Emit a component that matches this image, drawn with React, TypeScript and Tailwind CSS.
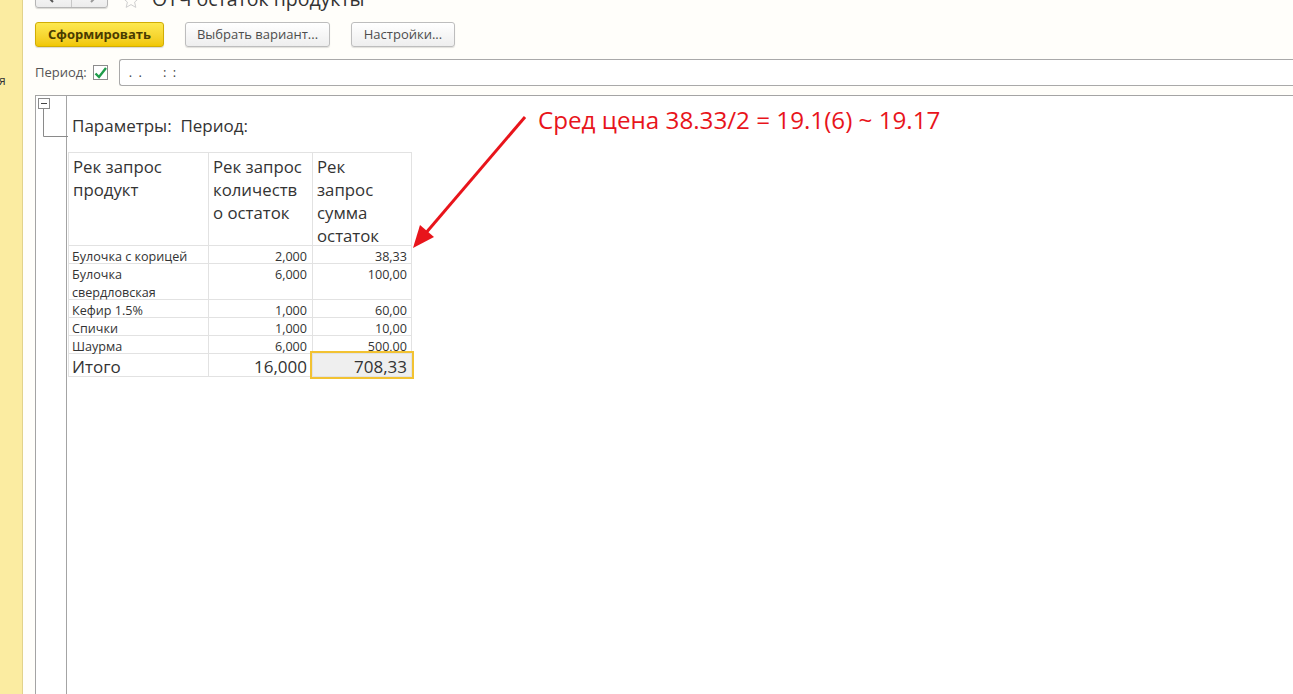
import React from "react";

const font = { fontFamily: '"Open Sans", "Liberation Sans", sans-serif' };

type Row = { name: React.ReactNode; qty: string; sum: string; h: string };

const rows: Row[] = [
  { name: "Булочка с корицей", qty: "2,000", sum: "38,33", h: "h-[17px]" },
  {
    name: (
      <>
        Булочка
        <br />
        свердловская
      </>
    ),
    qty: "6,000",
    sum: "100,00",
    h: "h-[35px]",
  },
  { name: "Кефир 1.5%", qty: "1,000", sum: "60,00", h: "h-[17px]" },
  { name: "Спички", qty: "1,000", sum: "10,00", h: "h-[17px]" },
  { name: "Шаурма", qty: "6,000", sum: "500,00", h: "h-[17px]" },
];

function NavButtons() {
  return (
    <div className="flex h-[24px] w-[73px] rounded-[3px] border border-[#b5b5b5] bg-gradient-to-b from-white to-[#ececec] shadow-[0_1px_1px_rgba(0,0,0,0.15)]">
      <div className="flex flex-1 items-end justify-center border-r border-[#c8c8c8] pb-[4px]">
        <svg width="16" height="12" viewBox="0 0 16 12">
          <path d="M15 6H3M7 1L2 6l5 5" stroke="#555" strokeWidth="2" fill="none" />
        </svg>
      </div>
      <div className="flex flex-1 items-end justify-center pb-[4px]">
        <svg width="16" height="12" viewBox="0 0 16 12">
          <path d="M1 6h12M9 1l5 5-5 5" stroke="#999" strokeWidth="2" fill="none" />
        </svg>
      </div>
    </div>
  );
}

function Star() {
  return (
    <svg width="18" height="17" viewBox="0 0 18 17">
      <path
        d="M9 1l2.3 5 5.4.5-4.1 3.6 1.2 5.3L9 12.6 4.2 15.4l1.2-5.3L1.3 6.5l5.4-.5z"
        fill="none"
        stroke="#cfcfcf"
        strokeWidth="1"
      />
    </svg>
  );
}

function GreyButton({ label, w }: { label: string; w: string }) {
  return (
    <button
      className={`${w} h-[25px] rounded-[3px] border border-[#bdbdbd] bg-gradient-to-b from-white to-[#eeeeee] text-[13px] text-[#4d4d4d] shadow-[0_1px_1px_rgba(0,0,0,0.12)]`}
    >
      {label}
    </button>
  );
}

const cell = "border border-[#e2e2e2]";

export default function App() {
  return (
    <div className="relative flex h-[694px] w-[1293px] overflow-hidden bg-white text-[#333]" style={font}>
      {/* left section panel */}
      <div className="w-[23px] shrink-0 border-r border-[#e2d38b] bg-[#fbeca1] pt-[72px] text-[12px] text-[#333]">
        <span className="-ml-[1px]">я</span>
      </div>

      <div className="flex min-w-0 flex-1 flex-col bg-[#fffefa] pl-[12px]">
        {/* title line */}
        <div className="-mt-[16px] flex h-[24px] items-end">
          <NavButtons />
          <div className="ml-[14px] mb-[-1px]">
            <Star />
          </div>
          <div className="ml-[12px] translate-y-[3px] text-[19.5px] leading-[24px] text-[#333]">
            ОТЧ остаток продукты
          </div>
        </div>

        {/* command bar */}
        <div className="mt-[14px] flex gap-[21px]">
          <button className="h-[25px] w-[129px] rounded-[3px] border border-[#d1ad05] bg-gradient-to-b from-[#fde94f] to-[#f1c700] text-[13px] font-bold text-[#4a3c00] shadow-[0_1px_1px_rgba(0,0,0,0.15)]">
            Сформировать
          </button>
          <GreyButton label="Выбрать вариант..." w="w-[145px]" />
          <GreyButton label="Настройки..." w="w-[104px]" />
        </div>

        {/* period */}
        <div className="mt-[12px] flex items-center">
          <span className="text-[13px] text-[#555]">Период:</span>
          <div className="ml-[6px] flex h-[15px] w-[15px] items-center justify-center border border-[#8c8c8c] bg-white">
            <svg width="13" height="12" viewBox="0 0 13 12">
              <path d="M1.5 6.5l3.5 3.5 7-9" stroke="#1f9c4a" strokeWidth="2.4" fill="none" />
            </svg>
          </div>
          <div className="ml-[11px] flex h-[27px] flex-1 items-center rounded-l-[3px] border border-r-0 border-[#a9a9a9] bg-white pl-[9px] text-[13px] tracking-[1.5px] text-[#444]">
            . .&nbsp;&nbsp;&nbsp;&nbsp;: :
          </div>
        </div>

        {/* report */}
        <div className="mt-[9px] flex flex-1 border-l border-t border-[#a4a4a4] bg-white">
          <div className="w-[31px] shrink-0 border-r border-[#a4a4a4] pl-[2px] pt-[2px]">
            <svg width="30" height="40" viewBox="0 0 30 40">
              <rect x="0.5" y="0.5" width="11" height="10" fill="#fff" stroke="#8a8a8a" />
              <path d="M3 5.5h6" stroke="#444" />
              <path d="M5.5 11v27.5H30" stroke="#8a8a8a" fill="none" />
            </svg>
          </div>

          <div className="flex-1 pl-[1px]">
            <div className="pl-[4px] pt-[18px] text-[17px] leading-[24px] text-[#333]">
              Параметры:&nbsp;&nbsp;Период:
            </div>

            <table className="mt-[14px] border-collapse text-[#333]">
              <tbody>
                <tr className="align-top text-[16.8px] leading-[23px]">
                  <td className={`w-[140px] ${cell} px-[4px]`}>
                    <div className="h-[92px] pt-[2px]">
                      Рек запрос
                      <br />
                      продукт
                    </div>
                  </td>
                  <td className={`w-[104px] ${cell} px-[4px]`}>
                    <div className="h-[92px] pt-[2px] whitespace-nowrap">
                      Рек запрос
                      <br />
                      количеств
                      <br />о остаток
                    </div>
                  </td>
                  <td className={`w-[99px] ${cell} px-[4px]`}>
                    <div className="h-[92px] pt-[2px]">
                      Рек
                      <br />
                      запрос
                      <br />
                      сумма
                      <br />
                      остаток
                    </div>
                  </td>
                </tr>
                {rows.map((r, i) => (
                  <tr key={i} className="align-top text-[12.6px] leading-[18px]">
                    <td className={`${cell} px-[3px]`}>
                      <div className={`${r.h} pt-[2px]`}>{r.name}</div>
                    </td>
                    <td className={`${cell} px-[5px] text-right`}>
                      <div className={`${r.h} pt-[2px]`}>{r.qty}</div>
                    </td>
                    <td className={`${cell} px-[4px] text-right`}>
                      <div className={`${r.h} pt-[2px]`}>{r.sum}</div>
                    </td>
                  </tr>
                ))}
                <tr className="text-[17px] leading-[22px]">
                  <td className={`${cell} px-[3px]`}>
                    <div className="h-[22px] pt-[2px]">Итого</div>
                  </td>
                  <td className={`${cell} px-[5px] text-right`}>
                    <div className="h-[22px] pt-[2px]">16,000</div>
                  </td>
                  <td className={`relative ${cell} bg-[#efefef] px-[4px] text-right`}>
                    <div className="h-[22px] pt-[2px]">708,33</div>
                    <span className="absolute -inset-[3px] border-2 border-[#f2c232]" />
                  </td>
                </tr>
              </tbody>
            </table>
          </div>
        </div>
      </div>

      {/* annotation */}
      <div className="absolute left-[538px] top-[104px] text-[24.2px] leading-[32px] text-[#e8141b]">
        Сред цена 38.33/2 = 19.1(6) ~ 19.17
      </div>
      <svg className="absolute left-0 top-0" width="1293" height="694" style={{ pointerEvents: "none" }}>
        <path d="M525 117L425 234" stroke="#e8141b" strokeWidth="3" fill="none" />
        <path d="M413 248l7-23 14 12z" fill="#e8141b" />
      </svg>
    </div>
  );
}
